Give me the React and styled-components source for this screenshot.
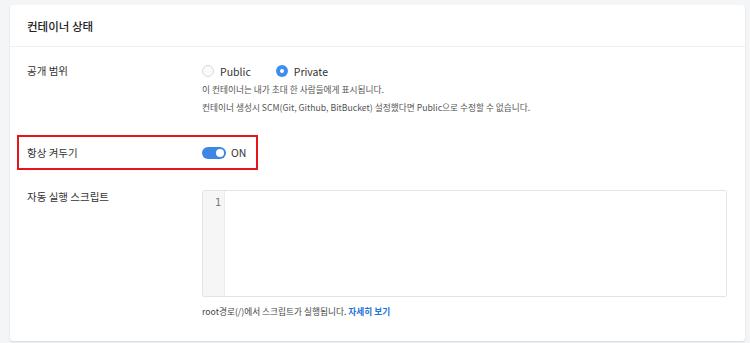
import React, { useState } from 'react';
import styled, { createGlobalStyle } from 'styled-components';

const GlobalStyle = createGlobalStyle`
  html, body {
    margin: 0;
    padding: 0;
    background: #f4f5f7;
    font-family: 'Noto Sans CJK KR', 'Noto Sans', sans-serif;
    color: #333;
  }
  * { box-sizing: border-box; }
`;

const Page = styled.div`
  padding: 5px 5px 4px 10px;
`;

const Card = styled.section`
  background: #fff;
  border-radius: 3px;
  box-shadow: 0 1px 2px rgba(0, 0, 0, 0.12);
`;

const Header = styled.h2`
  margin: 0;
  height: 42px;
  display: flex;
  align-items: center;
  padding: 0 17px;
  font-size: 11.5px;
  font-weight: 500;
  color: #222;
  border-bottom: 1px solid #eeeff1;
`;

const Body = styled.div`
  padding: 14px 18px 20px 17px;
  display: flex;
  flex-direction: column;
`;

const Row = styled.div`
  display: grid;
  grid-template-columns: 175px 1fr;
  margin-top: ${(p) => p.$top || 0}px;
`;

const Highlight = styled.div`
  display: grid;
  grid-template-columns: 175px 1fr;
  align-items: center;
  width: 241px;
  height: 35px;
  margin: 18px 0 0 -10px;
  padding-left: 8px;
  border: 2px solid #e8141b;
`;

const Label = styled.div`
  font-size: 10.5px;
  line-height: ${(p) => p.$lh || 20}px;
  color: #333;
`;

const RadioGroup = styled.div`
  display: flex;
  align-items: center;
  gap: 25px;
  height: 20px;
`;

const RadioItem = styled.label`
  display: flex;
  align-items: center;
  gap: 6px;
  font-size: 10.5px;
  color: #333;
  cursor: pointer;
`;

const Dot = styled.span`
  width: 12px;
  height: 12px;
  border-radius: 50%;
  background: ${(p) => (p.$checked ? '#3e8ef0' : '#fafafa')};
  border: ${(p) => (p.$checked ? 'none' : '1px solid #d9d9d9')};
  display: flex;
  align-items: center;
  justify-content: center;
  &::after {
    content: '';
    display: ${(p) => (p.$checked ? 'block' : 'none')};
    width: 4px;
    height: 4px;
    border-radius: 50%;
    background: #fff;
  }
`;

const Help = styled.p`
  margin: 0;
  font-size: 8.7px;
  line-height: 18px;
  color: #555;
`;

const Toggle = styled.button`
  display: flex;
  align-items: center;
  gap: 5px;
  padding: 0;
  border: none;
  background: none;
  font-family: inherit;
  font-size: 10.5px;
  color: #333;
  cursor: pointer;
`;

const Track = styled.span`
  position: relative;
  width: 24px;
  height: 12px;
  border-radius: 6px;
  background: ${(p) => (p.$on ? '#3e86e6' : '#ccc')};
  &::after {
    content: '';
    position: absolute;
    top: 2px;
    left: ${(p) => (p.$on ? '14px' : '2px')};
    width: 8px;
    height: 8px;
    border-radius: 50%;
    background: #fff;
  }
`;

const Editor = styled.div`
  display: flex;
  height: 107px;
  border: 1px solid #e3e4e7;
  border-radius: 2px;
  overflow: hidden;
`;

const Gutter = styled.div`
  width: 22px;
  background: #f6f6f6;
  border-right: 1px solid #ececec;
  padding: 6px 3px 0 0;
  text-align: right;
  font-family: 'DejaVu Sans Mono', 'Liberation Mono', monospace;
  font-size: 10px;
  color: #777;
`;

const Code = styled.textarea`
  flex: 1;
  border: none;
  outline: none;
  resize: none;
  padding: 6px 8px;
  font-family: 'DejaVu Sans Mono', monospace;
  font-size: 10px;
`;

const Footer = styled.p`
  margin: 6px 0 0;
  font-size: 8.7px;
  line-height: 18px;
  color: #444;
`;

const More = styled.a`
  color: #1f73d6;
  font-weight: 700;
  text-decoration: none;
`;

export default function App() {
  const [scope, setScope] = useState('private');
  const [alwaysOn, setAlwaysOn] = useState(true);

  return (
    <>
      <GlobalStyle />
      <Page>
        <Card>
          <Header>컨테이너 상태</Header>
          <Body>
            <Row>
              <Label>공개 범위</Label>
              <div>
                <RadioGroup>
                  <RadioItem onClick={() => setScope('public')}>
                    <Dot $checked={scope === 'public'} />
                    Public
                  </RadioItem>
                  <RadioItem onClick={() => setScope('private')}>
                    <Dot $checked={scope === 'private'} />
                    Private
                  </RadioItem>
                </RadioGroup>
                <Help>이 컨테이너는 내가 초대 한 사람들에게 표시됩니다.</Help>
                <Help>
                  컨테이너 생성시 SCM(Git, Github, BitBucket) 설정했다면 Public으로 수정할 수 없습니다.
                </Help>
              </div>
            </Row>

            <Highlight>
              <Label>항상 켜두기</Label>
              <Toggle type="button" onClick={() => setAlwaysOn(!alwaysOn)}>
                <Track $on={alwaysOn} />
                {alwaysOn ? 'ON' : 'OFF'}
              </Toggle>
            </Highlight>

            <Row $top={20}>
              <Label $lh={14}>자동 실행 스크립트</Label>
              <div>
                <Editor>
                  <Gutter>1</Gutter>
                  <Code spellCheck={false} />
                </Editor>
                <Footer>
                  root경로(/)에서 스크립트가 실행됩니다. <More href="#">자세히 보기</More>
                </Footer>
              </div>
            </Row>
          </Body>
        </Card>
      </Page>
    </>
  );
}
